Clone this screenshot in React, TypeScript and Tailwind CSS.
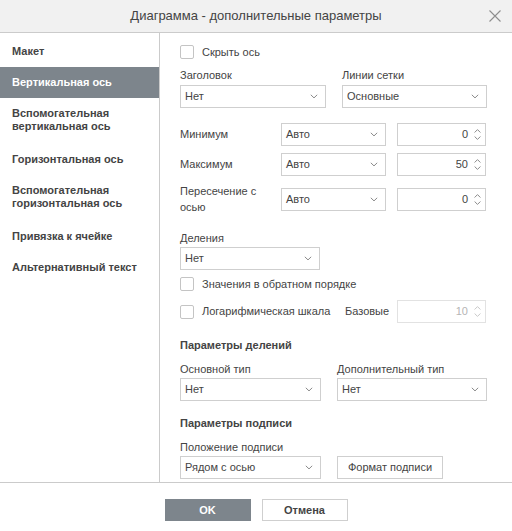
import React from "react";

const Chevron = () => (
  <svg width="8" height="5" viewBox="0 0 8 5" className="shrink-0">
    <path d="M0.8 0.8 L4 3.9 L7.2 0.8" fill="none" stroke="#8a8a8a" strokeWidth="1" />
  </svg>
);

const Select = ({ value, w }: { value: string; w: string }) => (
  <div className={`${w} h-[23px] border border-[#cfcfcf] bg-white flex items-center justify-between pl-[4px] pr-[7px]`}>
    <span className="text-[11px] text-[#444]">{value}</span>
    <Chevron />
  </div>
);

const Spin = ({ value, disabled }: { value: string; disabled?: boolean }) => (
  <div className={`w-[89px] h-[23px] border ${disabled ? "border-[#e2e2e2]" : "border-[#cfcfcf]"} bg-white flex items-center justify-end pr-[4px]`}>
    <span className={`text-[11px] ${disabled ? "text-[#b5b5b5]" : "text-[#444]"} mr-[6px]`}>{value}</span>
    <div className="flex flex-col gap-[3px]">
      <svg width="7" height="4" viewBox="0 0 7 4">
        <path d="M0.6 3.5 L3.5 0.6 L6.4 3.5" fill="none" stroke={disabled ? "#c8c8c8" : "#8a8a8a"} strokeWidth="1" />
      </svg>
      <svg width="7" height="4" viewBox="0 0 7 4">
        <path d="M0.6 0.5 L3.5 3.4 L6.4 0.5" fill="none" stroke={disabled ? "#c8c8c8" : "#8a8a8a"} strokeWidth="1" />
      </svg>
    </div>
  </div>
);

const Check = ({ label }: { label: string }) => (
  <div className="flex items-center h-[14px]">
    <div className="w-[14px] h-[14px] border border-[#c4c4c4] rounded-[2px] bg-white" />
    <span className="ml-[8px] text-[11px] text-[#444]">{label}</span>
  </div>
);

const items = [
  { t: "Макет" },
  { t: "Вертикальная ось", sel: true },
  { t: "Вспомогательная вертикальная ось", two: true },
  { t: "Горизонтальная ось" },
  { t: "Вспомогательная горизонтальная ось", two: true },
  { t: "Привязка к ячейке" },
  { t: "Альтернативный текст" },
];

export default function App() {
  return (
    <div
      className="w-[512px] h-[531px] bg-white flex flex-col text-[#444] overflow-hidden"
      style={{ fontFamily: '"Liberation Sans", Arial, sans-serif' }}
    >
      <div className="h-[33px] bg-[#f1f1f1] border-b border-[#cbcbcb] flex items-center justify-center relative shrink-0">
        <span className="text-[13px] text-[#444]">Диаграмма - дополнительные параметры</span>
        <svg className="absolute right-[11px] top-[10px]" width="12" height="12" viewBox="0 0 12 12">
          <path d="M0.5 0.5 L11.5 11.5 M11.5 0.5 L0.5 11.5" stroke="#8e8e8e" strokeWidth="1.1" />
        </svg>
      </div>
      <div className="flex h-[450px] border-b border-[#cbcbcb] shrink-0">
        <div className="w-[160px] border-r border-[#cbcbcb] pt-[3px] shrink-0">
          {items.map((it) => (
            <div
              key={it.t}
              className={`px-[12px] pt-[9px] ${it.two ? "pb-[11px]" : "pb-[9px]"} text-[11px] leading-[13px] font-bold ${
                it.sel ? "bg-[#7d858c] text-white" : "text-[#444]"
              }`}
            >
              {it.two ? (
                <>
                  {it.t.split(" ")[0]}
                  <br />
                  {it.t.split(" ").slice(1).join(" ")}
                </>
              ) : (
                it.t
              )}
            </div>
          ))}
        </div>
        <div className="flex-1 pl-[20px] pt-[12px] text-[11px] leading-[13px]">
          <Check label="Скрыть ось" />
          <div className="flex gap-[16px] mt-[10px]">
            <div>
              <div className="mb-[3px]">Заголовок</div>
              <Select value="Нет" w="w-[146px]" />
            </div>
            <div>
              <div className="mb-[3px]">Линии сетки</div>
              <Select value="Основные" w="w-[145px]" />
            </div>
          </div>
          <div className="mt-[15px] flex flex-col gap-[7px]">
            {[
              ["Минимум", "0"],
              ["Максимум", "50"],
              ["Пересечение с осью", "0"],
            ].map(([l, v], i) => (
              <div key={l} className="flex items-center">
                <div className={`w-[101px] ${i === 2 ? "leading-[16px] pr-[10px]" : ""}`}>{l}</div>
                <Select value="Авто" w="w-[105px]" />
                <div className="ml-[11px]">
                  <Spin value={v} />
                </div>
              </div>
            ))}
          </div>
          <div className="mt-[17px] mb-[2px]">Деления</div>
          <Select value="Нет" w="w-[140px]" />
          <div className="mt-[7px]">
            <Check label="Значения в обратном порядке" />
          </div>
          <div className="mt-[9px] flex items-center">
            <div className="w-[165px]">
              <Check label="Логарифмическая шкала" />
            </div>
            <span className="w-[52px]">Базовые</span>
            <Spin value="10" disabled />
          </div>
          <div className="mt-[16px] font-bold">Параметры делений</div>
          <div className="flex gap-[16px] mt-[11px]">
            <div>
              <div className="mb-[2px]">Основной тип</div>
              <Select value="Нет" w="w-[141px]" />
            </div>
            <div>
              <div className="mb-[2px]">Дополнительный тип</div>
              <Select value="Нет" w="w-[150px]" />
            </div>
          </div>
          <div className="mt-[16px] font-bold">Параметры подписи</div>
          <div className="mt-[11px] mb-[2px]">Положение подписи</div>
          <div className="flex gap-[16px]">
            <Select value="Рядом с осью" w="w-[141px]" />
            <div className="w-[106px] h-[23px] border border-[#cfcfcf] bg-white flex items-center justify-center">
              Формат подписи
            </div>
          </div>
        </div>
      </div>
      <div className="flex-1 flex justify-center pt-[16px] gap-[11px]">
        <div className="w-[86px] h-[22px] bg-[#7d858c] text-white text-[11px] font-bold flex items-center justify-center">
          OK
        </div>
        <div className="w-[86px] h-[22px] border border-[#cfcfcf] text-[#444] text-[11px] font-bold flex items-center justify-center">
          Отмена
        </div>
      </div>
    </div>
  );
}
